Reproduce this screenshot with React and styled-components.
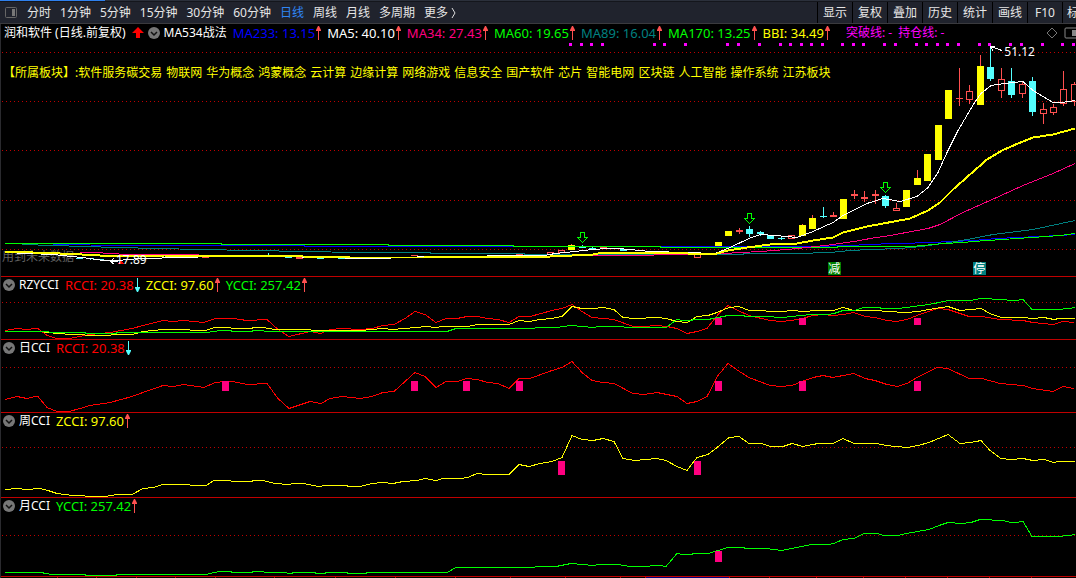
import React from "react";
import styled, { createGlobalStyle } from "styled-components";

const GlobalStyle = createGlobalStyle`
  * {
    box-sizing: border-box;
  }

  body {
    margin: 0;
    background-color: #000;
    color: #fff;
    font-family: "Noto Sans", "Noto Sans CJK SC", sans-serif;
    font-size: 12px;
    overflow-x: hidden;
  }
`;

const WIDTH = 1076;

const periods = [
  "分时",
  "1分钟",
  "5分钟",
  "15分钟",
  "30分钟",
  "60分钟",
  "日线",
  "周线",
  "月线",
  "多周期"
];

const tools = ["显示", "复权", "叠加", "历史", "统计", "画线", "F10"];

const sectors = [
  "【所属板块】:软件服务碳交易",
  "物联网",
  "华为概念",
  "鸿蒙概念",
  "云计算",
  "边缘计算",
  "网络游戏",
  "信息安全",
  "国产软件",
  "芯片",
  "智能电网",
  "区块链",
  "人工智能",
  "操作系统",
  "江苏板块"
];

const averages = [
  { label: "MA233: 13.15", color: "#0000ff", trend: "up" },
  { label: "MA5: 40.10", color: "#ffffff", trend: "up" },
  { label: "MA34: 27.43", color: "#ff0080", trend: "up" },
  { label: "MA60: 19.65", color: "#00ff00", trend: "up" },
  { label: "MA89: 16.04", color: "#008080", trend: "up" },
  { label: "MA170: 13.25", color: "#00ff00", trend: "up" },
  { label: "BBI: 34.49", color: "#ffff00", trend: "up" }
];

const RCCI = { label: "RCCI: 20.38", color: "#ff0000", trend: "down" };
const ZCCI = { label: "ZCCI: 97.60", color: "#ffff00", trend: "up" };
const YCCI = { label: "YCCI: 257.42", color: "#00ff00", trend: "up" };

// every series is "x,y x,y ..." in window coordinates
const dayCci =
  "5,399 17,396 27,398 35,396 38,396 47,407 57,411 69,411 80,408 90,405 110,402 132,396 143,392 163,385 173,386 184,384 204,387 215,382 225,381 233,381 247,384 267,383 278,398 289,408 310,401 321,403 330,398 342,396 360,398 372,396 383,392 394,391 405,381 415,372 425,376 436,387 446,381 457,381 467,378 477,379 488,382 498,383 509,388 519,378 530,378 552,370 562,367 572,361 582,372 592,380 603,382 614,383 633,393 644,394 657,392 667,394 677,396 687,403 697,401 707,396 718,375 728,363 738,370 749,377 770,385 781,386 792,385 802,381 813,377 823,375 833,377 843,375 854,373 865,378 875,380 887,384 897,386 907,383 917,377 937,367 948,368 969,378 982,378 1000,383 1023,385 1033,388 1053,391 1063,386 1074,388";

const weekCci =
  "5,489 17,488 27,489 40,488 48,490 57,493 73,495 96,496 105,496 117,494 132,494 143,488 153,487 163,484 189,484 191,485 206,485 214,480 230,480 232,481 252,481 253,480 263,480 275,483 288,484 295,483 304,483 318,486 327,485 347,485 348,486 360,486 372,483 383,482 393,483 403,481 417,480 425,478 436,480 443,478 460,478 468,477 477,473 487,474 509,474 519,464 529,466 540,463 552,461 562,457 572,435 582,439 593,440 603,438 614,441 623,458 635,460 657,458 666,460 677,466 687,470 697,457 708,454 717,447 729,437 739,436 749,443 761,443 771,446 783,446 792,443 803,446 818,443 833,443 843,438 854,443 877,443 886,445 907,447 918,445 929,442 948,434 960,443 971,442 981,440 990,450 1001,458 1011,459 1023,458 1033,460 1044,459 1054,462 1059,461 1075,461";

const monthCci =
  "5,572 43,572 44,573 53,574 85,574 86,575 116,575 117,574 206,574 214,572 221,571 231,571 232,572 252,572 253,571 263,571 265,572 283,572 290,573 295,572 314,572 317,573 325,573 326,572 347,572 348,573 366,573 367,572 447,572 456,567 534,567 536,566 556,566 571,563 593,565 599,564 618,564 630,566 649,566 651,565 660,565 666,566 677,553 683,554 692,554 693,553 708,553 718,550 728,547 744,547 745,548 766,548 782,550 811,544 828,544 834,543 843,539 854,538 864,533 877,533 884,535 898,535 906,533 929,529 939,525 948,522 961,523 971,522 980,519 1003,520 1011,522 1016,522 1023,521 1032,536 1057,536 1069,535 1075,534";

const priceLines = [
  {
    color: "#0000ff",
    points:
      "53,244 127,245 304,245 305,246 805,246 855,245 863,244 900,243 930,242 953,241 973,240 997,238 1017,237 1060,235 1075,234"
  },
  {
    color: "#008080",
    points:
      "22,244 53,245 84,246 117,247 158,248 200,249 252,250 305,251 357,252 430,252 431,253 524,253 525,254 743,254 744,253 797,253 830,252 850,250 870,249 900,248 922,246 943,243 973,238 993,234 1033,229 1047,226 1075,220"
  },
  {
    color: "#00ff00",
    points:
      "5,243 221,243 222,244 388,244 389,245 513,245 514,246 660,246 661,247 837,247 838,246 912,246 933,244 943,243 963,242 973,241 1017,238 1047,236 1060,235 1075,233"
  },
  {
    color: "#ff0080",
    points:
      "80,252 95,252 127,254 173,254 277,256 350,257 461,257 565,256 572,255 629,255 680,254 723,253 760,251 787,249 807,247 833,244 860,240 870,238 890,235 928,228 940,224 963,212 990,200 1023,185 1053,173 1075,163"
  },
  {
    color: "#ffffff",
    points:
      "5,252 53,254 72,256 90,258 103,260 117,260 140,258 158,258 167,257 230,256 277,255 310,257 378,258 430,256 545,255 555,253 575,251 593,249 608,248 618,248 640,250 650,251 687,252 715,253 730,247 749,238 760,234 775,235 797,237 813,231 833,222 843,215 867,203 883,198 900,201 917,196 928,187 938,172 947,152 958,130 974,103 981,93 991,85 1005,83 1023,81 1033,90 1053,102 1062,102 1075,100"
  }
];

const bbi =
  "5,251 33,252 60,253 82,254 100,255 130,256 165,255 277,255 303,256 350,257 424,257 425,256 550,256 572,255 593,254 603,252 687,252 688,253 717,253 728,250 747,247 770,244 797,243 813,240 833,237 843,232 867,226 910,218 928,210 940,202 953,189 987,159 1002,150 1018,143 1033,137 1053,134 1075,128";

// [kind, left, top, bottom, wickTop, wickBottom]
const candles = [
  ["fall", 76, 258, 259, 258, 259],
  ["fall", 87, 258, 259, 258, 260],
  ["fall", 97, 259, 260, 259, 260],
  ["rise", 202, 257, 258, 257, 258],
  ["rise", 254, 256, 257, 256, 257],
  ["fall", 265, 255, 256, 253, 256],
  ["fall", 285, 257, 258, 257, 258],
  ["rise", 296, 257, 259, 257, 259],
  ["fall", 317, 258, 259, 258, 259],
  ["rise", 327, 257, 258, 257, 258],
  ["fall", 338, 258, 259, 258, 259],
  ["rise", 380, 258, 259, 258, 259],
  ["rise", 411, 255, 256, 255, 256],
  ["rise", 516, 254, 255, 254, 255],
  ["hollow", 547, 252, 255, 252, 255],
  ["hollow", 558, 250, 253, 250, 253],
  ["strong", 568, 245, 250, 244, 250],
  ["fall", 579, 247, 248, 245, 248],
  ["fall", 589, 248, 249, 247, 249],
  ["rise", 600, 247, 248, 247, 248],
  ["fall", 620, 249, 251, 249, 251],
  ["rise", 641, 253, 254, 253, 254],
  ["rise", 652, 253, 254, 253, 254],
  ["fall", 683, 253, 254, 253, 254],
  ["hollow", 694, 254, 258, 254, 258],
  ["strong", 715, 242, 248, 242, 248],
  ["strong", 725, 231, 236, 231, 236],
  ["rise", 736, 230, 232, 228, 234],
  ["fall", 746, 229, 234, 226, 237],
  ["fall", 757, 232, 234, 231, 236],
  ["fall", 767, 235, 239, 235, 239],
  ["fall", 778, 238, 239, 237, 240],
  ["hollow", 788, 235, 239, 235, 239],
  ["strong", 799, 225, 236, 224, 236],
  ["strong", 809, 218, 229, 215, 229],
  ["fall", 820, 216, 217, 207, 218],
  ["rise", 830, 215, 217, 212, 217],
  ["strong", 840, 199, 219, 199, 219],
  ["rise", 851, 194, 196, 190, 199],
  ["rise", 861, 197, 199, 191, 202],
  ["rise", 872, 194, 196, 190, 204],
  ["fall", 882, 196, 206, 195, 208],
  ["hollow", 893, 208, 211, 203, 211],
  ["strong", 903, 190, 207, 190, 207],
  ["strong", 914, 178, 185, 170, 185],
  ["strong", 924, 154, 181, 154, 181],
  ["strong", 935, 125, 160, 125, 160],
  ["strong", 945, 90, 119, 90, 119],
  ["rise", 956, 98, 99, 68, 106],
  ["hollow", 966, 91, 100, 85, 104],
  ["strong", 977, 66, 105, 55, 105],
  ["fall", 987, 67, 79, 46, 81],
  ["hollow", 998, 79, 91, 68, 98],
  ["fall", 1008, 81, 95, 68, 98],
  ["hollow", 1019, 84, 94, 82, 98],
  ["fall", 1029, 81, 112, 77, 116],
  ["hollow", 1040, 109, 114, 103, 124],
  ["hollow", 1050, 107, 113, 104, 115],
  ["hollow", 1060, 89, 104, 71, 106],
  ["hollow", 1071, 84, 102, 82, 106]
];

const signalDots = [
  569, 580, 590, 601, 653, 663, 684, 726, 737, 758, 779, 789, 800, 810, 821,
  841, 852, 862, 883, 894, 915, 925, 936, 946, 957, 978, 988, 1009, 1020, 1041,
  1061, 1072
];

const axisTicks = [
  57, 96, 136, 175, 215, 274, 335, 395, 455, 510, 565, 620, 645, 729, 769, 816,
  863, 905, 947, 989, 1031
];

// moves a series onto the scale of the combined panel
const rescale = (points, from, to, factor) =>
  points
    .split(" ")
    .map(point => {
      const [x, y] = point.split(",").map(Number);
      return `${x},${Math.round(to + (y - from) * factor)}`;
    })
    .join(" ");

const Plot = ({ top, height, children }) => (
  <PlotSvg
    $height={height}
    viewBox={`0 ${top} ${WIDTH} ${height}`}
    preserveAspectRatio="none"
    shapeRendering="crispEdges"
    aria-hidden="true"
  >
    {children}
  </PlotSvg>
);

const Guide = ({ y }) => (
  <path d={`M2 ${y + 0.5}H${WIDTH}`} stroke="#c00000" strokeDasharray="1 3" />
);

const Series = ({ points, color, width = 1 }) => (
  <polyline
    points={points}
    transform="translate(0 0.5)"
    fill="none"
    stroke={color}
    strokeWidth={width}
  />
);

const Marks = ({ xs, y, height }) =>
  xs.map(x => (
    <rect key={x} x={x} y={y} width="7" height={height} fill="#ff0080" />
  ));

const Candle = ({ kind, left, top, bottom, wickTop, wickBottom }) => {
  const color = kind === "fall" ? "#54ffff" : "#ff5050";
  const middle = left + 3.5;
  return (
    <g>
      <path
        d={`M${middle} ${wickTop}V${top}M${middle} ${bottom}V${wickBottom}`}
        stroke={color}
      />
      {kind === "hollow" ? (
        <rect
          x={left + 0.5}
          y={top + 0.5}
          width="6"
          height={bottom - top - 1}
          fill="none"
          stroke={color}
        />
      ) : (
        <rect
          x={left}
          y={top}
          width="7"
          height={bottom - top}
          fill={kind === "strong" ? "#ffff00" : color}
        />
      )}
    </g>
  );
};

const SellArrow = ({ x, y }) => (
  <path
    transform={`translate(${x} ${y})`}
    d="M-1.5 0.5H2.5V5.5H5.5L0.5 10.5L-4.5 5.5H-1.5Z"
    fill="none"
    stroke="#00ff00"
  />
);

const Trend = ({ direction }) => (
  <svg width="7" height="14" viewBox="0 0 7 14" aria-hidden="true">
    {direction === "up" ? (
      <path d="M3 4H4V14H3ZM3 0H4L6 4V5H1V4Z" fill="#ff5050" />
    ) : (
      <path d="M3 0H4V10H3ZM1 9H6V10L4 14H3L1 10Z" fill="#54ffff" />
    )}
  </svg>
);

const Toggle = ({ name }) => (
  <ToggleButton aria-label={name}>
    <svg width="12" height="12" viewBox="0 0 12 12">
      <circle cx="6" cy="6" r="6" fill="#777" />
      <path d="M3 5L6 8L9 5" fill="none" stroke="#111" strokeWidth="1.5" />
    </svg>
  </ToggleButton>
);

const Indicator = ({ label, color, trend }) => (
  <Reading $color={color}>
    {label}
    <Trend direction={trend} />
  </Reading>
);

const CciPanel = ({ name, readings, top, height, children }) => (
  <Panel>
    <PanelHeader>
      <Toggle name={name} />
      <PanelName>{name}</PanelName>
      {readings.map(reading => (
        <Indicator key={reading.label} {...reading} />
      ))}
    </PanelHeader>
    <Plot top={top} height={height}>
      {children}
    </Plot>
  </Panel>
);

const App = () => (
  <Page>
    <GlobalStyle />
    <TabStrip>
      <ActiveTab />
    </TabStrip>
    <Toolbar>
      <LayoutButton aria-label="侧栏">
        <svg width="13" height="12" viewBox="0 0 13 12">
          <rect
            x="0.5"
            y="0.5"
            width="11"
            height="10"
            rx="1"
            fill="none"
            stroke="#666"
          />
          <rect x="7" y="2" width="3" height="7" fill="#777" />
        </svg>
      </LayoutButton>
      <Periods>
        {periods.map(period => (
          <PeriodButton key={period} $active={period === "日线"}>
            {period}
          </PeriodButton>
        ))}
        <PeriodButton>
          更多
          <svg width="10" height="12" viewBox="0 0 10 12">
            <path d="M4 1L7 6L4 11" fill="none" stroke="#ddd" />
          </svg>
        </PeriodButton>
      </Periods>
      <Tools>
        {tools.map(tool => (
          <ToolButton key={tool}>{tool}</ToolButton>
        ))}
        <ToolButton $cut>标</ToolButton>
      </Tools>
    </Toolbar>

    <Charts>
      <Panel>
        <MainHeader>
          <StockName>润和软件 (日线.前复权)</StockName>
          <svg width="12" height="12" viewBox="0 0 12 12" aria-hidden="true">
            <path d="M6 0L12 6H8V11H4V6H0Z" fill="#ff0000" />
          </svg>
          <Toggle name="MA534战法" />
          <PanelName>MA534战法</PanelName>
          {averages.map(average => (
            <Indicator key={average.label} {...average} />
          ))}
          <Levels>
            <span>突破线: -</span>
            <span>持仓线: -</span>
          </Levels>
          <Corner>
            <svg width="12" height="12" viewBox="0 0 12 12">
              <path d="M6 1L11 6L6 11L1 6Z" fill="none" stroke="#777" />
            </svg>
            <svg width="12" height="12" viewBox="0 0 12 12">
              <rect
                x="1"
                y="1"
                width="14"
                height="10"
                rx="1"
                fill="none"
                stroke="#888"
              />
              <rect x="8" y="3" width="4" height="6" fill="#888" />
            </svg>
          </Corner>
        </MainHeader>
        <Sectors>
          {sectors.map(sector => (
            <span key={sector}>{sector}</span>
          ))}
        </Sectors>
        <FutureNote>用到未来数据</FutureNote>
        <Plot top={42} height={234}>
          {[52, 101, 150, 200, 249].map(y => (
            <Guide key={y} y={y} />
          ))}
          {signalDots.map(x => (
            <rect key={x} x={x} y="43" width="3" height="3" fill="#ff00ff" />
          ))}
          {candles.map(([kind, left, top, bottom, wickTop, wickBottom]) => (
            <Candle
              key={left}
              kind={kind}
              left={left}
              top={top}
              bottom={bottom}
              wickTop={wickTop}
              wickBottom={wickBottom}
            />
          ))}
          {priceLines.map(line => (
            <Series key={line.color} {...line} />
          ))}
          <Series points={bbi} color="#ffff00" width={2} />
          <SellArrow x={582} y={232} />
          <SellArrow x={749} y={213} />
          <SellArrow x={885} y={182} />
          <path
            d="M1002 50.5L990.5 46.5M990.5 46.5L995 46M990.5 46.5L993 51"
            fill="none"
            stroke="#fff"
          />
          <path
            d="M118 261.5H110.5M110.5 261.5L114 258M110.5 261.5L114 264"
            fill="none"
            stroke="#fff"
          />
          <path d="M118 264L121 260L124 264Z" fill="#ff0000" />
        </Plot>
        <HighPrice>51.12</HighPrice>
        <LowPrice>17.89</LowPrice>
        <Badge $color="#008000" $left="77%">
          减
        </Badge>
        <Badge $color="#008080" $left="90.5%">
          停
        </Badge>
      </Panel>

      <CciPanel
        name="RZYCCI"
        readings={[RCCI, ZCCI, YCCI]}
        top={294}
        height={45}
      >
        <Guide y={302} />
        <Series points={rescale(dayCci, 361, 304, 0.68)} color="#ff0000" />
        <Series points={rescale(weekCci, 435, 306, 0.47)} color="#ffff00" />
        <Series points={rescale(monthCci, 519, 298, 0.62)} color="#00ff00" />
        <Marks xs={[715, 799, 914]} y={318} height={7} />
      </CciPanel>

      <CciPanel name="日CCI" readings={[RCCI]} top={357} height={55}>
        <Guide y={367} />
        <Series points={dayCci} color="#ff0000" />
        <Marks xs={[222, 411, 463, 516, 715, 799, 914]} y={381} height={10} />
      </CciPanel>

      <CciPanel name="周CCI" readings={[ZCCI]} top={430} height={67}>
        <Guide y={447} />
        <Series points={weekCci} color="#ffff00" />
        <Marks xs={[558, 694]} y={461} height={14} />
      </CciPanel>

      <CciPanel name="月CCI" readings={[YCCI]} top={515} height={61}>
        <Guide y={535} />
        <Series points={monthCci} color="#00ff00" />
        <Marks xs={[715]} y={551} height={11} />
      </CciPanel>

      <Plot top={577} height={1}>
        <rect x="645" y="577" width="84" height="1" fill="#000080" />
        {axisTicks.map(x => (
          <rect key={x} x={x} y="577" width="1" height="1" fill="#c00000" />
        ))}
      </Plot>
    </Charts>
  </Page>
);

const Page = styled.div`
  display: flex;
  flex-direction: column;
`;

const TabStrip = styled.div`
  height: 2px;
  background-color: #2b303b;
  border-bottom: 1px solid #14161c;
`;

const ActiveTab = styled.div`
  width: 105px;
  height: 1px;
  background-color: #2f80ed;
`;

const Toolbar = styled.nav`
  display: flex;
  height: 22px;
  padding-left: 5px;
  background-color: #20232d;
  border-bottom: 1px solid #3a3a3e;
`;

const Button = styled.button`
  flex: none;
  padding: 0;
  border: 0;
  background: none;
  color: #e6e6e6;
  font: inherit;
  line-height: 20px;
  white-space: nowrap;
`;

const LayoutButton = styled(Button)`
  display: flex;
  align-items: center;
  width: 22px;
`;

const Periods = styled.div`
  display: flex;
  gap: 9px;
`;

const PeriodButton = styled(Button)`
  display: flex;
  align-items: center;
  color: ${props => (props.$active ? "#2f86f6" : "#e6e6e6")};
`;

const Tools = styled.div`
  display: flex;
  margin-left: auto;
`;

const ToolButton = styled(Button)`
  width: ${props => (props.$cut ? "14px" : "35px")};
  padding-left: ${props => (props.$cut ? "4px" : "0")};
  border-left: 1px solid #000;
  overflow: hidden;
`;

const Charts = styled.main`
  border-left: 1px solid #2a2a2e;
`;

const Panel = styled.section`
  position: relative;
  border-bottom: 1px solid #c00000;
`;

const PanelHeader = styled.header`
  display: flex;
  align-items: center;
  gap: 4px;
  height: 17px;
  padding: 0 0 2px 2px;
  line-height: 16px;
  white-space: nowrap;
  overflow: hidden;

  > * {
    flex: none;
  }
`;

const MainHeader = styled(PanelHeader)`
  height: 18px;
  padding: 0 0 0 3px;
`;

const StockName = styled.h1`
  margin: 0 2px 0 0;
  font-size: 12px;
  font-weight: normal;
`;

const PanelName = styled.h2`
  margin: 0 2px 0 0;
  font-size: 12px;
  font-weight: normal;
`;

const ToggleButton = styled.button`
  display: flex;
  padding: 0;
  border: 0;
  background: none;
`;

const Reading = styled.span`
  display: flex;
  align-items: center;
  margin-right: 1px;
  color: ${props => props.$color};
  font-size: 13px;
`;

const Levels = styled.div`
  display: flex;
  gap: 6px;
  margin-left: 10px;
  color: #ff00ff;
`;

const Corner = styled.div`
  display: flex;
  gap: 6px;
  margin-left: auto;
`;

const PlotSvg = styled.svg`
  display: block;
  position: relative;
  width: calc(100% + 1px);
  height: ${props => props.$height}px;
  margin-left: -1px;
`;

const Overlay = styled.div`
  position: absolute;
  line-height: 16px;
  white-space: nowrap;
`;

const Sectors = styled(Overlay)`
  display: flex;
  gap: 4px;
  top: 41px;
  left: 2px;
  color: #ffff00;
`;

const FutureNote = styled(Overlay)`
  top: 225px;
  left: 1px;
  color: #606060;
`;

const HighPrice = styled(Overlay)`
  top: 20px;
  right: 41px;
`;

const LowPrice = styled(Overlay)`
  top: 228px;
  left: 115px;
`;

const Badge = styled(Overlay)`
  bottom: 1px;
  left: ${props => props.$left};
  width: 13px;
  height: 13px;
  margin-left: -1px;
  background-color: ${props => props.$color};
  line-height: 13px;
  text-align: center;
`;

export default App;
